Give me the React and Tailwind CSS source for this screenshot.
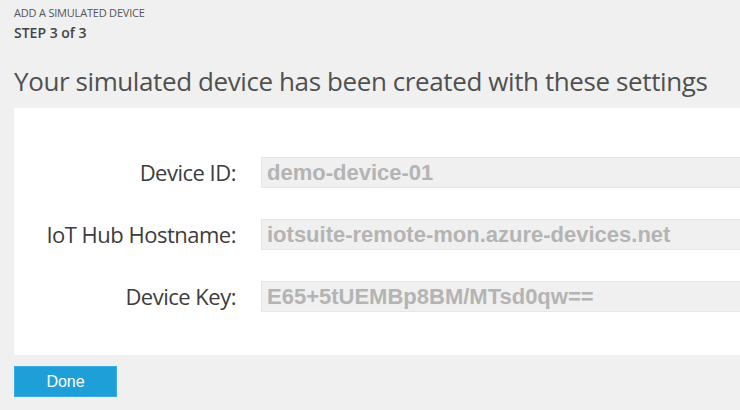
const fields = [
  { label: "Device ID:", value: "demo-device-01" },
  { label: "IoT Hub Hostname:", value: "iotsuite-remote-mon.azure-devices.net" },
  { label: "Device Key:", value: "E65+5tUEMBp8BM/MTsd0qw==" },
];

export default function App() {
  return (
    <div
      className="w-[740px] h-[410px] overflow-hidden bg-[#f0f0f0] text-[#444]"
      style={{ fontFamily: '"Open Sans", "Noto Sans", sans-serif' }}
    >
      <div className="pl-[14px] pt-[5px]">
        <div className="text-[11px] leading-[15px] text-[#555] tracking-[-0.2px]">
          ADD A SIMULATED DEVICE
        </div>
        <div className="text-[14px] leading-[20px] font-semibold text-[#444] mt-[3px]">
          STEP 3 of 3
        </div>
        <h1 className="text-[26px] leading-[34px] text-[#505050] mt-[21px] tracking-[-0.4px]">
          Your simulated device has been created with these settings
        </h1>
      </div>
      <div className="ml-[14px] mt-[10px] bg-white h-[247px] pt-[49px]">
        <div className="flex flex-col gap-[31px]">
          {fields.map((f) => (
            <div key={f.label} className="flex items-center h-[31px]">
              <div className="w-[222px] text-right text-[22px] leading-[31px] text-[#3c3c3c] tracking-[-0.5px]">
                {f.label}
              </div>
              <div
                className="ml-[25px] flex-1 h-[31px] bg-[#f0f0f0] border border-[#e6e6e6] border-r-0 pl-[5px] flex items-center text-[22px] leading-[31px] font-bold text-[#b4b4b4]"
                style={{ fontFamily: '"Liberation Sans", Arial, sans-serif' }}
              >
                {f.value}
              </div>
            </div>
          ))}
        </div>
      </div>
      <div className="pl-[14px] mt-[11px]">
        <button
          className="w-[103px] h-[31px] bg-[#1e9fd8] text-white text-[16px] border border-[#3aaee0]"
          style={{ fontFamily: '"Liberation Sans", Arial, sans-serif' }}
        >
          Done
        </button>
      </div>
    </div>
  );
}
